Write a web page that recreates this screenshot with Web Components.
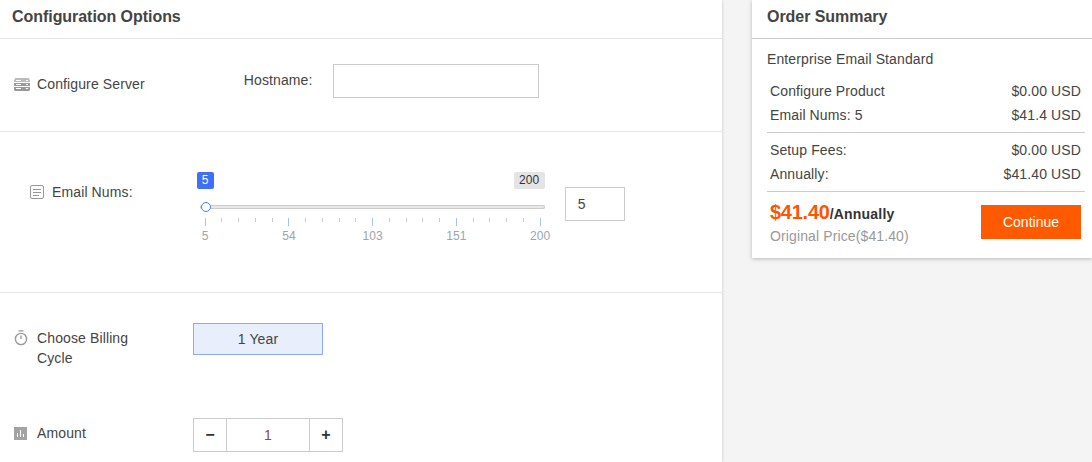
<!DOCTYPE html>
<html>
<head>
<meta charset="utf-8">
<title>Configuration Options</title>
<style>
html, body { margin: 0; height: 100%; overflow: hidden; background: #f4f4f4; }
body { font-family: "Liberation Sans", Arial, sans-serif; font-size: 14px; letter-spacing: .12px; color: #333; }
</style>
</head>
<body>
<shop-page>
  <config-panel slot="left">
    <config-row label="Configure Server" icon="server" style="--row-h:92px;--label-h:90px">
      <host-field></host-field>
    </config-row>
    <config-row label="Email Nums:" icon="list" style="--row-h:160px;--row-left:30px;--label-h:120px;--label-gap:8px">
      <email-slider></email-slider>
    </config-row>
    <billing-block></billing-block>
  </config-panel>
  <order-summary slot="right"></order-summary>
</shop-page>

<script>
const icons = {
  server: `<svg width="16" height="13" viewBox="0 0 16 13"><path fill="#bbb" d="M1 0h14l1 3v1H0V3z"/><path fill="#999" d="M0 5h16v3H0z"/><path fill="#999" d="M0 9h16v3l-1 1H1l-1-1z"/><path fill="#fff" d="M2 2h5v1H2zM2 6h5v1H2zM2 10h5v1H2zM12 2h2v1h-2zM12 6h2v1h-2zM12 10h2v1h-2z"/></svg>`,
  list: `<svg width="14" height="14" viewBox="0 0 14 14" fill="none" stroke="#999"><rect x=".5" y=".5" width="13" height="13" rx="1.5"/><path d="M3 4.5h8M3 7.5h8M3 10.5h6"/></svg>`,
  timer: `<svg width="14" height="16" viewBox="0 0 14 16" fill="none" stroke="#999" stroke-width="1.4"><circle cx="7" cy="9" r="5.6"/><path d="M4.5 .9h5M7 5.5V9"/></svg>`,
  chart: `<svg width="13" height="13" viewBox="0 0 13 13"><rect width="13" height="13" fill="#a3a3a3"/><path fill="#fff" d="M3 6h1v4H3zM6 3h1v7H6zM9 7h1v3H9z"/></svg>`
};

class ShopPage extends HTMLElement {
  constructor() {
    super();
    this.attachShadow({ mode: 'open' });
    this.shadowRoot.innerHTML = `
    <style>
    :host { display: flex; height: 462px; overflow: hidden; }
    .left { width: 722px; flex: none; background: #fff; box-shadow: 0 0 3px rgba(0,0,0,.2); }
    .right { margin-left: 30px; width: 340px; flex: none; }
    </style>
    <div class="left"><slot name="left"></slot></div>
    <div class="right"><slot name="right"></slot></div>`;
  }
}

class ConfigPanel extends HTMLElement {
  constructor() {
    super();
    this.attachShadow({ mode: 'open' });
    this.shadowRoot.innerHTML = `
    <style>
    :host { display: block; }
    h2 { margin: 0; height: 38px; line-height: 33px; padding-left: 12px; font-size: 16px; letter-spacing: -.05px; color: #444; border-bottom: 1px solid #e5e5e5; }
    </style>
    <h2>Configuration Options</h2>
    <slot></slot>`;
  }
}

class ConfigRow extends HTMLElement {
  constructor() {
    super();
    this.attachShadow({ mode: 'open' });
    this.shadowRoot.innerHTML = `
    <style>
    :host { display: flex; height: var(--row-h); border-bottom: 1px solid #e5e5e5; padding-left: var(--row-left, 14px); }
    .label { display: flex; align-items: center; gap: var(--label-gap, 7px); height: var(--label-h); color: #444; }
    svg { display: block; }
    </style>
    <div class="label">${icons[this.getAttribute('icon')]}<span>${this.getAttribute('label')}</span></div>
    <slot></slot>`;
  }
}

class HostField extends HTMLElement {
  constructor() {
    super();
    this.attachShadow({ mode: 'open' });
    this.shadowRoot.innerHTML = `
    <style>
    :host { display: flex; margin: 25px 0 0 99px; height: 34px; }
    label { color: #444; line-height: 32px; width: 89px; }
    input { box-sizing: border-box; width: 206px; height: 34px; border: 1px solid #ccc; padding: 0; outline: 0; }
    </style>
    <label>Hostname:</label><input type="text">`;
  }
}

class EmailSlider extends HTMLElement {
  constructor() {
    super();
    this.attachShadow({ mode: 'open' });
    let ticks = '';
    for (let i = 0; i <= 20; i++) ticks += `<i class="${i % 5 == 0 ? 'major' : ''}"></i>`;
    const labels = ['5', '54', '103', '151', '200'].map(t => `<b><span>${t}</span></b>`).join('');
    this.shadowRoot.innerHTML = `
    <style>
    :host { display: flex; margin: 40px 0 0 64px; }
    .slider { width: 348px; }
    .bubbles { display: flex; justify-content: space-between; height: 17px; line-height: 17px; font-size: 12px; text-align: center; }
    .min { width: 17px; background: #4070f4; color: #fff; border-radius: 2px; }
    .max { width: 31px; background: #e4e4e4; color: #333; border-radius: 2px; }
    .track { position: relative; height: 4px; margin: 16px 0 0 3px; background: #e8e8e8; border-radius: 2px; box-shadow: inset 0 0 0 1px #ccc; }
    .thumb { position: absolute; left: 1px; top: -3px; box-sizing: border-box; width: 10px; height: 10px; border: 1.5px solid #4f7cf0; border-radius: 50%; background: #fff; }
    .ticks { display: flex; justify-content: space-between; align-items: flex-start; margin: 9px 4px 0 8px; height: 8px; }
    i { display: block; width: 1px; height: 4px; background: #ccc; }
    i.major { height: 8px; background: #a7c5e5; }
    .labels { display: flex; justify-content: space-between; margin: 3px 4px 0 8px; font-size: 12px; color: #9aa5b1; }
    .labels b { display: flex; justify-content: center; width: 1px; font-weight: normal; }
    .num { box-sizing: border-box; width: 60px; height: 34px; margin: 15px 0 0 20px; border: 1px solid #ccc; padding: 0 0 0 12px; font: inherit; color: #444; outline: 0; }
    </style>
    <div class="slider">
      <div class="bubbles"><span class="min">5</span><span class="max">200</span></div>
      <div class="track"><span class="thumb"></span></div>
      <div class="ticks">${ticks}</div>
      <div class="labels">${labels}</div>
    </div>
    <input class="num" value="5">`;
  }
}

class BillingBlock extends HTMLElement {
  constructor() {
    super();
    this.attachShadow({ mode: 'open' });
    this.shadowRoot.innerHTML = `
    <style>
    :host { display: grid; grid-template-columns: 179px 150px; padding: 30px 0 0 14px; row-gap: 50px; color: #444; }
    .label { display: flex; gap: 9px; line-height: 20px; padding-top: 5px; width: 130px; }
    .label svg { flex: none; margin-top: 2px; }
    .amount { padding-top: 0; padding-bottom: 4px; align-items: center; gap: 10px; }
    .amount svg { margin: 0; }
    .year { box-sizing: border-box; width: 130px; height: 32px; line-height: 30px; text-align: center; background: #e8eefc; border: 1px solid #8fa8f5; }
    .step { display: flex; height: 34px; box-sizing: border-box; border: 1px solid #ccc; width: 150px; line-height: 32px; text-align: center; }
    .step b { width: 32px; font-size: 16px; color: #333; }
    .step span { flex: 1; border: solid #ccc; border-width: 0 1px; color: #8a4a3c; }
    </style>
    <div class="label">${icons.timer}<span>Choose Billing Cycle</span></div>
    <div class="year">1 Year</div>
    <div class="label amount">${icons.chart}<span>Amount</span></div>
    <div class="step"><b>&minus;</b><span>1</span><b>+</b></div>`;
  }
}

class OrderSummary extends HTMLElement {
  constructor() {
    super();
    this.attachShadow({ mode: 'open' });
    this.shadowRoot.innerHTML = `
    <style>
    :host { display: block; background: #fff; height: 258px; box-shadow: 0 1px 4px rgba(0,0,0,.25); color: #444; }
    h2 { margin: 0; height: 38px; line-height: 33px; padding-left: 15px; font-size: 16px; letter-spacing: -.05px; border-bottom: 1px solid #ccc; }
    .name { padding: 12px 0 0 15px; line-height: 16px; }
    .group { margin: 0 7px 0 15px; }
    .line { display: flex; justify-content: space-between; height: 24px; line-height: 24px; }
    .g1 { padding: 12px 4px 5px 3px; border-bottom: 1px solid #ccc; }
    .g2 { padding: 5px 4px 5px 3px; border-bottom: 1px solid #ccc; }
    .total { display: flex; justify-content: space-between; margin: 0 11px 0 18px; padding-top: 7px; }
    .price { font-size: 20px; font-weight: bold; letter-spacing: -.25px; color: #ff5500; line-height: 26px; }
    .per { font-size: 14px; color: #333; letter-spacing: .2px; }
    .orig { color: #999; line-height: 19px; }
    button { width: 100px; height: 34px; margin-top: 6px; border: 0; background: #ff5a00; color: #fff; font: inherit; }
    </style>
    <h2>Order Summary</h2>
    <div class="name">Enterprise Email Standard</div>
    <div class="group g1">
      <div class="line"><span>Configure Product</span><span>$0.00 USD</span></div>
      <div class="line"><span>Email Nums: 5</span><span>$41.4 USD</span></div>
    </div>
    <div class="group g2">
      <div class="line"><span>Setup Fees:</span><span>$0.00 USD</span></div>
      <div class="line"><span>Annually:</span><span>$41.40 USD</span></div>
    </div>
    <div class="total">
      <div><div class="price">$41.40<span class="per">/Annually</span></div><div class="orig">Original Price($41.40)</div></div>
      <button>Continue</button>
    </div>`;
  }
}

customElements.define('shop-page', ShopPage);
customElements.define('config-panel', ConfigPanel);
customElements.define('config-row', ConfigRow);
customElements.define('host-field', HostField);
customElements.define('email-slider', EmailSlider);
customElements.define('billing-block', BillingBlock);
customElements.define('order-summary', OrderSummary);
</script>
</body>
</html>
